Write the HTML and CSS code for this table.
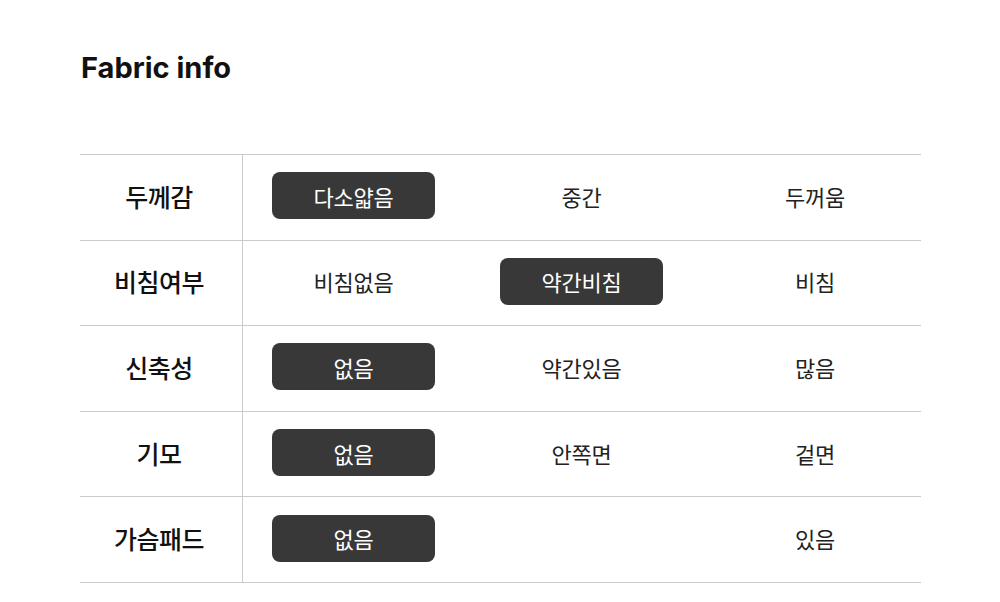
FILE: index.html
```html
<!DOCTYPE html>
<html lang="ko">
<head>
<meta charset="utf-8">
<link rel="stylesheet" href="styles.css">
</head>
<body>
<main class="page">
  <h1 class="title">Fabric info</h1>
  <div class="table">
    <div class="row">
      <div class="label">두께감</div>
      <div class="cell"><span class="pill on">다소얇음</span></div>
      <div class="cell"><span class="pill">중간</span></div>
      <div class="cell last"><span class="pill">두꺼움</span></div>
    </div>
    <div class="row">
      <div class="label">비침여부</div>
      <div class="cell"><span class="pill">비침없음</span></div>
      <div class="cell"><span class="pill on">약간비침</span></div>
      <div class="cell last"><span class="pill">비침</span></div>
    </div>
    <div class="row">
      <div class="label">신축성</div>
      <div class="cell"><span class="pill on">없음</span></div>
      <div class="cell"><span class="pill">약간있음</span></div>
      <div class="cell last"><span class="pill">많음</span></div>
    </div>
    <div class="row">
      <div class="label">기모</div>
      <div class="cell"><span class="pill on">없음</span></div>
      <div class="cell"><span class="pill">안쪽면</span></div>
      <div class="cell last"><span class="pill">겉면</span></div>
    </div>
    <div class="row">
      <div class="label">가슴패드</div>
      <div class="cell"><span class="pill on">없음</span></div>
      <div class="cell"><span class="pill"></span></div>
      <div class="cell last"><span class="pill">있음</span></div>
    </div>
  </div>
</main>
</body>
</html>
```

FILE: styles.css
```css
html, body {
  margin: 0;
  padding: 0;
  background: #ffffff;
}
body {
  font-family: Inter, "Noto Sans CJK KR", sans-serif;
  color: #111;
}
.page {
  padding: 50px 79px 0 80px;
}
.title {
  margin: 0 0 0 1px;
  font-size: 29px;
  font-weight: 700;
  line-height: 36px;
  letter-spacing: 0;
}
.table {
  margin-top: 68px;
  border-top: 1.5px solid #cbcbcb;
}
.row {
  display: grid;
  grid-template-columns: 163px 221px 235px 1fr;
  height: 85.6px;
  box-sizing: border-box;
  border-bottom: 1.5px solid #cbcbcb;
}
.label {
  display: flex;
  align-items: center;
  justify-content: center;
  padding: 0 4px 3px 0;
  border-right: 1px solid #cbcbcb;
  font-family: "Noto Sans CJK KR", sans-serif;
  font-size: 25px;
  font-weight: 500;
  color: #111;
  letter-spacing: -0.5px;
}
.cell {
  display: flex;
  align-items: center;
  justify-content: center;
  padding-bottom: 3px;
}
.cell.last {
  padding-left: 10px;
}
.pill {
  flex: none;
  width: 163px;
  height: 47px;
  border-radius: 8px;
  display: flex;
  align-items: center;
  justify-content: center;
  font-family: "Noto Sans CJK KR", sans-serif;
  font-size: 22px;
  font-weight: 400;
  color: #222;
  letter-spacing: -0.3px;
}
.pill.on {
  background: #383838;
  color: #ffffff;
}
```
